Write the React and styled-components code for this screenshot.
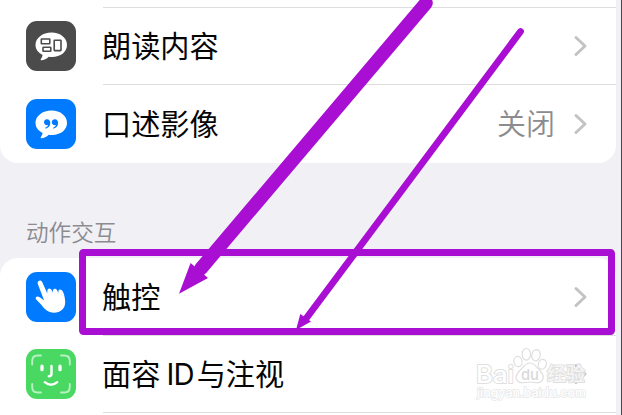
import React from "react";
import styled, { createGlobalStyle } from "styled-components";

const GlobalStyle = createGlobalStyle`
  * { box-sizing: border-box; }
  body {
    margin: 0;
    overflow: hidden;
    background: #f1f0f5;
    font-family: Inter, "Noto Sans CJK SC", sans-serif;
  }
`;

const Screen = styled.main`
  position: relative;
  width: 622px;
  height: 415px;
  overflow: hidden;
  background: #f1f0f5;
  border-right: 1px solid #45464b;
  padding-right: 5px;
`;

const Card = styled.section`
  background: #fff;
  overflow: hidden;
  border-radius: ${(p) => (p.$end ? "0 0 18px 18px" : "18px 18px 0 0")};
`;

const Row = styled.div`
  display: flex;
  height: ${(p) => p.$height}px;
  padding-left: 26px;
`;

const IconTile = styled.svg`
  flex: none;
  width: 50px;
  height: 50px;
  margin-top: ${(p) => p.$top}px;
  border-radius: 11px;
  background: ${(p) => p.$color};
`;

const RowBody = styled.div`
  flex: 1;
  display: flex;
  align-items: center;
  margin-left: 26px;
  padding-right: 28px;
  background: ${(p) => (p.$line ? "linear-gradient(#dededf, #dededf) 1px 0 / 100% 1px no-repeat" : "none")};
`;

const Label = styled.span`
  flex: 1;
  padding-top: 2px;
  font-size: 29.2px;
  line-height: 40px;
  color: #050505;
  white-space: nowrap;
`;

const Latin = styled.span`
  display: inline-block;
  margin: 0 3px 0 6px;
  letter-spacing: -0.8px;
`;

const Value = styled.span`
  margin-right: 18px;
  padding-top: 2px;
  font-size: 29px;
  line-height: 40px;
  font-weight: 350;
  color: #8c8c90;
`;

const ChevronIcon = styled.svg`
  flex: none;
  width: 15px;
  height: 22px;
`;

const SectionTitle = styled.h2`
  margin: 0;
  height: 95px;
  padding: 54px 0 0 26px;
  font-size: 22.6px;
  line-height: 32px;
  font-weight: 350;
  color: #8b8b90;
`;

const BottomLine = styled.div`
  height: 3px;
  margin-left: 103px;
  border-top: 1px solid #dededf;
`;

const Overlay = styled.svg`
  position: absolute;
  inset: 0;
  width: 622px;
  height: 415px;
`;

function Chevron() {
  return (
    <ChevronIcon viewBox="0 0 15 22" fill="none" stroke="#c3c3c6" strokeWidth="3" strokeLinecap="round" strokeLinejoin="round">
      <path d="M3 2.5 12 11 3 19.5" />
    </ChevronIcon>
  );
}

const bubble = "M25.5 11.500C34.500 11.500 41 17 41 24C41 31 34.500 36 26 36C24.800 36 23.800 36 22.800 35.800C20.500 37.800 18 39.300 15.300 39.300C14.500 39.300 14.500 38.600 14.900 38C15.900 36.600 16.400 35.300 16.600 33.900C12.300 31.700 9.500 28.200 9.500 24C9.500 17 16.500 11.500 25.500 11.500Z";

function SpokenIcon() {
  return (
    <IconTile viewBox="0 0 50 50" $color="#4b4b4b" $top={14}>
      <path d={bubble} fill="#fff" />
      <g fill="none" stroke="#4b4b4b" strokeWidth="1.6">
        <rect x="15.300" y="18" width="8.500" height="4.800" rx=".5" />
        <rect x="17" y="26.300" width="7.800" height="4" rx=".5" />
        <rect x="28.200" y="19.200" width="6.800" height="10.400" rx=".5" />
      </g>
    </IconTile>
  );
}

function DescriptionIcon() {
  return (
    <IconTile viewBox="0 0 50 50" $color="#007bff" $top={15}>
      <path d={bubble} fill="#fff" />
      <g fill="#007bff">
        <path d="M21 20.300C23 20.300 24.300 22 24.300 24C24.300 27 22.400 29 20 29.500C19.200 29.600 19 28.700 19.700 28.400C21 27.900 21.800 27 22 26C20 26.600 18 25.500 18 23.300C18 21.600 19.300 20.300 21 20.300Z" />
        <path d="M28.800 20.300C30.800 20.300 32.100 22 32.100 24C32.100 27 30.200 29 27.800 29.500C27 29.600 26.800 28.700 27.500 28.400C28.800 27.900 29.600 27 29.800 26C27.800 26.600 25.800 25.500 25.800 23.300C25.800 21.600 27.100 20.300 28.800 20.300Z" />
      </g>
    </IconTile>
  );
}

function TouchIcon() {
  return (
    <IconTile viewBox="0 0 50 50" $color="#007bff" $top={14}>
      <path
        fill="#fff"
        d="M12.300 9.200C13.700 8.100 15.600 8.600 16.300 10.300L21.300 21.500C21.300 19 21.300 16.600 23.300 16.500C25.500 16.500 26.200 18.700 26.700 21C26.700 18.500 27 16.700 28.900 16.700C31 16.700 31.700 19.200 32.200 21.500C32.200 19 32.500 17.200 34.200 17.400C37.800 17.900 39 25.300 39.200 30C39.400 36.500 34.500 40.700 28 40.700C22 40.700 18.200 36.800 15.300 32.800L10.200 27.500C9.100 26.200 9.900 24.400 11.700 24.500C13.800 24.700 16 26.700 18.100 28.600L12.100 12.800C11.400 11.400 11.500 10 12.300 9.200Z"
      />
    </IconTile>
  );
}

function FaceIcon() {
  return (
    <IconTile viewBox="0 0 50 50" $color="#49d963" $top={14}>
      <g fill="none" strokeLinecap="round">
        <path
          stroke="#b7f1c1"
          strokeWidth="1.900"
          d="M6.200 15.500V12Q6.200 6.500 11.700 6.500H15M35 6.500H38.300Q43.800 6.500 43.800 12V15.500M43.800 35V38Q43.800 43.500 38.300 43.500H35M15 43.500H11.700Q6.200 43.500 6.200 38V35"
        />
        <path stroke="#fff" strokeWidth="3.300" d="M16 17.200V20.700M34 17.200V20.700" />
        <path stroke="#fff" strokeWidth="2.400" d="M25.500 17V25Q25.500 27.200 22.800 27.200M18.800 33.200Q25 38.500 31.200 33.200" />
      </g>
    </IconTile>
  );
}

function Watermark() {
  return (
    <Overlay viewBox="0 0 622 415">
      <g fill="#fff" fillOpacity=".8" stroke="#dedede" strokeWidth="1.200">
        <ellipse cx="518" cy="361.500" rx="4" ry="5.200" transform="rotate(-15 518 361.500)" />
        <ellipse cx="526.300" cy="354.300" rx="4.200" ry="5.800" />
        <ellipse cx="536" cy="355.200" rx="4.200" ry="5.700" transform="rotate(12 536 355.200)" />
        <ellipse cx="542.300" cy="364.300" rx="4" ry="5" transform="rotate(20 542.300 364.300)" />
        <path d="M530 363C535 363 537 368 541 372C546 378 542 384 535 382.500Q530 381.500 525 382.500C517 384 513 378 519 371.500C523 367.500 525 363 530 363Z" />
      </g>
      <g fill="#fff" stroke="#e0e0e0" strokeWidth="1.800" paintOrder="stroke" fontFamily="Inter, 'Noto Sans CJK SC', sans-serif" fontWeight="500">
        <text x="476" y="382.500" fontSize="24" textLength="38" lengthAdjust="spacingAndGlyphs">Bai</text>
        <text x="521" y="379.500" fontSize="15" fill="#d9d9d9" stroke="none" textLength="18" lengthAdjust="spacingAndGlyphs">du</text>
        <text x="547" y="380.500" fontSize="19" fillOpacity=".7" textLength="38">经验</text>
        <text x="477" y="397" fontSize="12.500" stroke="#e8e8e8" strokeWidth="1.500" textLength="109" lengthAdjust="spacingAndGlyphs">jingyan.baidu.com</text>
      </g>
    </Overlay>
  );
}

function Annotations() {
  return (
    <Overlay viewBox="0 0 622 415" fill="#a80fd3">
      <rect x="82.500" y="252.500" width="529" height="79" rx="1" fill="none" stroke="#a80fd3" strokeWidth="7" />
      <path d="M426 3 201 268.500" stroke="#a80fd3" strokeWidth="13.600" strokeLinecap="round" />
      <path d="M179 293.700 190.600 263 208 278Z" />
      <path d="M520.500 31.500 305 320" stroke="#a80fd3" strokeWidth="6.800" strokeLinecap="round" />
      <path d="M296 330 300.300 314 311 321.500Z" />
    </Overlay>
  );
}

export default function App() {
  return (
    <>
      <GlobalStyle />
      <Screen>
        <Card $end>
          <Row $height={7} />
          <Row $height={77}>
            <SpokenIcon />
            <RowBody $line><Label>朗读内容</Label><Chevron /></RowBody>
          </Row>
          <Row $height={79}>
            <DescriptionIcon />
            <RowBody $line><Label>口述影像</Label><Value>关闭</Value><Chevron /></RowBody>
          </Row>
        </Card>
        <SectionTitle>动作交互</SectionTitle>
        <Card>
          <Row $height={77}>
            <TouchIcon />
            <RowBody><Label>触控</Label><Chevron /></RowBody>
          </Row>
          <Row $height={77}>
            <FaceIcon />
            <RowBody $line><Label>面容<Latin>ID</Latin>与注视</Label><Chevron /></RowBody>
          </Row>
          <BottomLine />
        </Card>
        <Watermark />
        <Annotations />
      </Screen>
    </>
  );
}
